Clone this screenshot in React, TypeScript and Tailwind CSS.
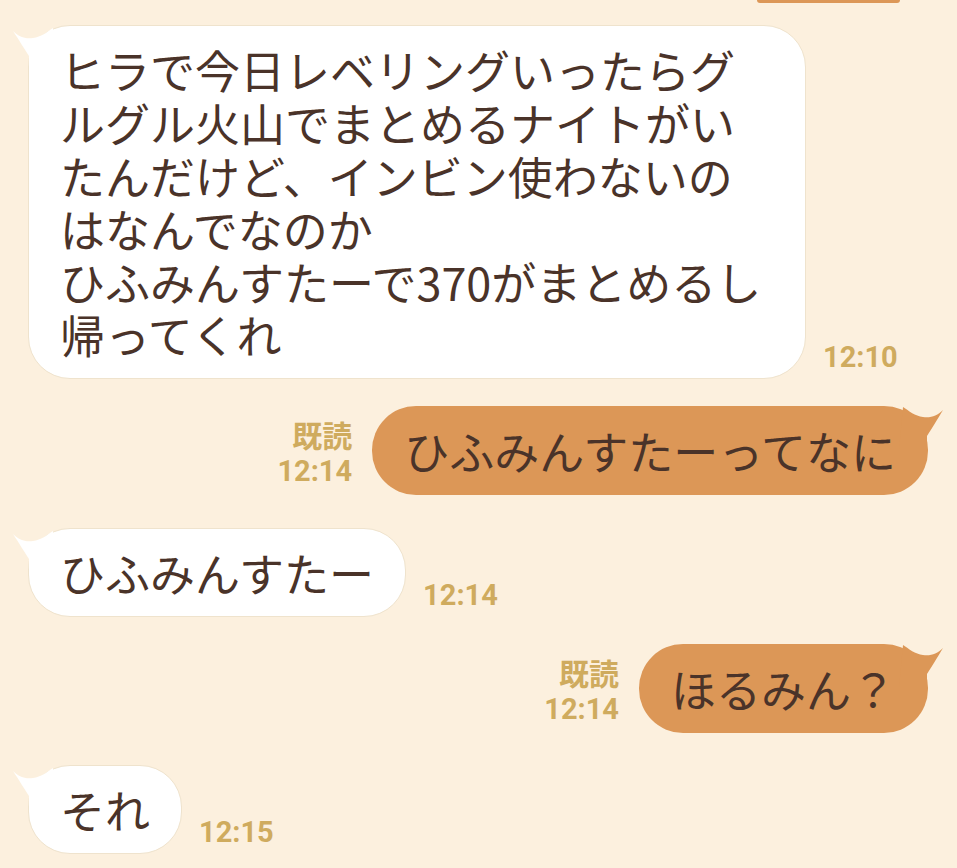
import React from 'react';

const WHITE = '#ffffff';
const ORANGE = '#dc9757';

// little curled tail on the top corner of a bubble
const Tail = ({ side, color }: { side: 'left' | 'right'; color: string }) => {
  if (side === 'left') {
    return (
      <svg className="absolute top-0 left-[-16px]" width="44" height="44" viewBox="0 0 44 44">
        <path
          d="M0 5 C6 11 12 13 20 12 C28 11 34 6 40 2 L44 44 L16 44 L16 30 C12 24 6 14 0 5 Z"
          fill={color}
        />
      </svg>
    );
  }
  return (
    <svg className="absolute top-0 right-[-15px]" width="44" height="44" viewBox="0 0 44 44">
      <path
        d="M44 4 C38 10 32 12 24 11 C16 10 10 5 4 1 L0 44 L28 44 L28 30 C32 24 38 14 44 4 Z"
        fill={color}
      />
    </svg>
  );
};

const Time = ({ children }: { children: React.ReactNode }) => (
  <span className="mb-[6px] font-['Roboto','Noto_Sans_CJK_JP',sans-serif] text-[29px] font-bold leading-[32px] text-[#cfab5e]">
    {children}
  </span>
);

const Incoming = ({
  lines,
  time,
  className,
  width,
}: {
  lines: string[];
  time: string;
  className?: string;
  width?: string;
}) => (
  <div className={`flex items-end gap-[17px] pl-[28px] ${className ?? ''}`}>
    <div
      className={`relative rounded-[42px] border border-[#efe3cd] bg-white px-[31px] py-[17px] text-[45px] leading-[53px] whitespace-nowrap text-[#4a3329] ${width ?? ''}`}
    >
      <Tail side="left" color={WHITE} />
      <div className="relative">
        {lines.map((l) => (
          <div key={l}>{l}</div>
        ))}
      </div>
    </div>
    <Time>{time}</Time>
  </div>
);

const Outgoing = ({ text, time, className }: { text: string; time: string; className?: string }) => (
  <div className={`flex items-end justify-end gap-[20px] pr-[29px] ${className ?? ''}`}>
    <div className="mb-[7px] flex flex-col items-end font-['Roboto','Noto_Sans_CJK_JP',sans-serif] text-[29px] font-bold leading-[34px] text-[#cfab5e]">
      <span className="text-[30px]">既読</span>
      <span>{time}</span>
    </div>
    <div className="relative rounded-[44px] bg-[#dc9757] px-[32px] py-[18px] text-[45px] leading-[53px] whitespace-nowrap text-[#4a3329]">
      <Tail side="right" color={ORANGE} />
      <div className="relative">{text}</div>
    </div>
  </div>
);

export default function App() {
  return (
    <div className="h-[868px] overflow-hidden bg-[#fcf0de] font-['Noto_Sans_CJK_JP',sans-serif]">
      {/* end of the previous outgoing bubble, cut off by the top edge */}
      <div className="flex justify-end pr-[57px]">
        <div className="h-[3px] w-[143px] rounded-b-full bg-[#dc9757]" />
      </div>

      <Incoming
        className="mt-[22px]"
        width="w-[778px]"
        time="12:10"
        lines={[
          'ヒラで今日レベリングいったらグ',
          'ルグル火山でまとめるナイトがい',
          'たんだけど、インビン使わないの',
          'はなんでなのか',
          'ひふみんすたーで370がまとめるし',
          '帰ってくれ',
        ]}
      />

      <Outgoing className="mt-[27px]" text="ひふみんすたーってなに" time="12:14" />

      <Incoming className="mt-[33px]" time="12:14" lines={['ひふみんすたー']} />

      <Outgoing className="mt-[27px]" text="ほるみん？" time="12:14" />

      <Incoming className="mt-[32px]" time="12:15" lines={['それ']} />
    </div>
  );
}
